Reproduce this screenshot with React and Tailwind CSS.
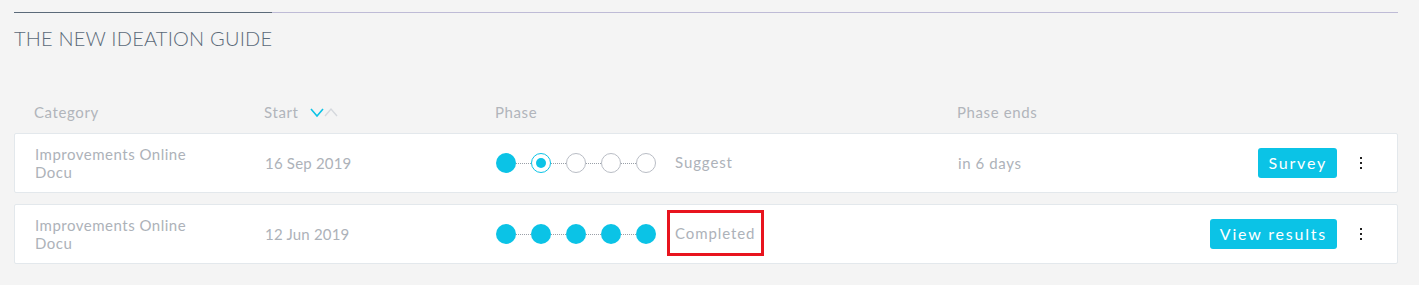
import React from 'react';

const font = { fontFamily: 'Lato, "Open Sans", sans-serif' };

const rows = [
  { category: 'Improvements Online Docu', start: '16 Sep 2019', done: 1, current: 1, label: 'Suggest', ends: 'in 6 days', action: 'Survey' },
  { category: 'Improvements Online Docu', start: '12 Jun 2019', done: 5, current: -1, label: 'Completed', ends: '', action: 'View results', marked: true },
];

const Dot = ({ state }) => {
  if (state === 'done') return <span className="block w-5 h-5 rounded-full bg-[#0bc3e6]" />;
  if (state === 'current')
    return (
      <span className="flex items-center justify-center w-5 h-5 rounded-full border border-[#0bc3e6] bg-white">
        <span className="block w-[10px] h-[10px] rounded-full bg-[#0bc3e6]" />
      </span>
    );
  return <span className="block w-5 h-5 rounded-full border border-[#b9bdc5] bg-white" />;
};

const Phases = ({ done, current }) => {
  const states = [0, 1, 2, 3, 4].map((i) => (i < done ? 'done' : i === current ? 'current' : 'todo'));
  return (
    <div className="flex items-center">
      {states.map((s, i) => (
        <React.Fragment key={i}>
          {i > 0 && <span className="block w-[15px] border-t border-dotted border-[#9aa0a8]" />}
          <Dot state={s} />
        </React.Fragment>
      ))}
    </div>
  );
};

const Kebab = () => (
  <div className="flex flex-col items-center gap-[3px] w-2">
    <span className="block w-[2px] h-[2px] bg-[#222]" />
    <span className="block w-[2px] h-[2px] bg-[#222]" />
    <span className="block w-[2px] h-[2px] bg-[#222]" />
  </div>
);

export default function App() {
  return (
    <div className="w-[1419px] h-[285px] bg-[#f4f4f4] pl-[14px] pr-[21px] pt-[12px]" style={font}>
      <div className="flex h-px">
        <div className="w-[258px] h-px bg-[#5b6a79]" />
        <div className="flex-1 h-px bg-[#bebbd6]" />
      </div>
      <h1 className="mt-[13px] text-[20px] leading-6 font-light text-[#5b6a79] tracking-[0.2px]">THE NEW IDEATION GUIDE</h1>

      <div className="mt-[50px] grid grid-cols-[230px_231px_462px_1fr] px-5 text-[15px] tracking-[0.6px] text-[#b1b5bb] h-[25px] items-center">
        <span>Category</span>
        <span className="flex items-center">
          Start
          <svg width="32" height="14" viewBox="0 0 32 14" className="ml-[12px]">
            <polyline points="1,3 7,10 13,3" fill="none" stroke="#0bc3e6" strokeWidth="1.6" />
            <polyline points="15,10 21,3 27,10" fill="none" stroke="#d5d8dd" strokeWidth="1.4" />
          </svg>
        </span>
        <span>Phase</span>
        <span>Phase ends</span>
      </div>

      <div className="mt-[8px] flex flex-col gap-[11px]">
        {rows.map((r, i) => (
          <div key={i} className="grid grid-cols-[230px_231px_462px_1fr] items-center h-[60px] px-5 bg-white border border-[#e3e8ec] rounded-[2px] text-[15px] text-[#adb2b9]">
            <span className="leading-[18px] w-[180px] tracking-[0.5px]">{r.category}</span>
            <span className="tracking-[0.2px]">{r.start}</span>
            <div className="flex items-center">
              <Phases done={r.done} current={r.current} />
              <span className="relative ml-[19px] tracking-[0.9px] leading-[22px] -mt-[2px]">
                {r.label}
                {r.marked && <span className="absolute -left-[8px] -right-[9px] -top-[12px] -bottom-[12px] border-[3px] border-[#e8141e]" />}
              </span>
            </div>
            <div className="flex items-center">
              <span className="flex-1 tracking-[0.6px]">{r.ends}</span>
              <button className="h-[30px] px-[10px] rounded-[3px] bg-[#0bc3e6] text-white text-[16px] tracking-[1.8px]">{r.action}</button>
              <div className="ml-[20px] mr-[12px]"><Kebab /></div>
            </div>
          </div>
        ))}
      </div>
    </div>
  );
}
